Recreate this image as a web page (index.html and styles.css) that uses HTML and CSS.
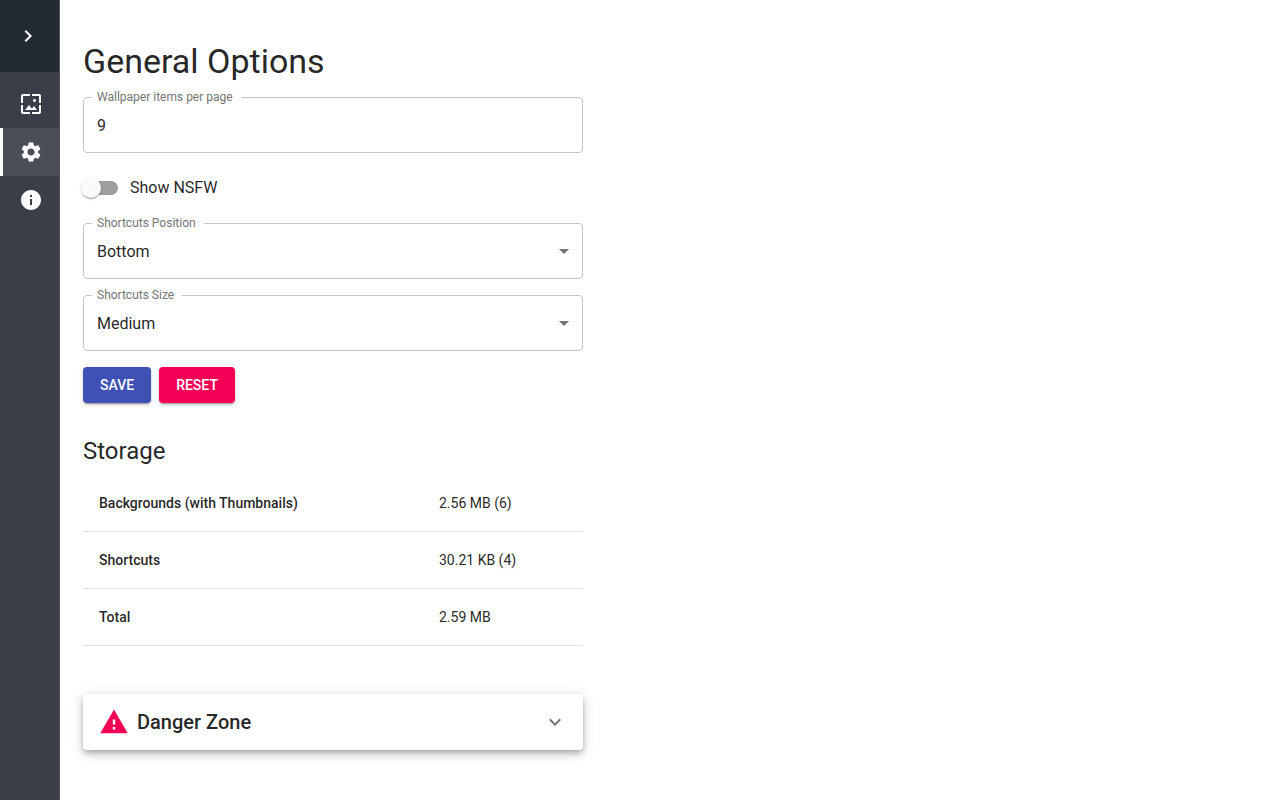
FILE: index.html
```html
<!DOCTYPE html>
<html lang="en">
<head>
<meta charset="utf-8">
<title>General Options</title>
<link rel="stylesheet" href="styles.css">
</head>
<body>
<nav class="sidebar" aria-label="Main">
  <button class="sidebar-toggle" type="button" aria-label="Expand menu">
    <svg class="icon-toggle" viewBox="0 0 24 24"><path d="M10 6L8.590 7.410 13.170 12l-4.580 4.590L10 18l6-6z"/></svg>
  </button>
  <a class="nav-item" href="#wallpapers" aria-label="Wallpapers">
    <svg class="icon" viewBox="0 0 24 24"><path d="M4 4h7V2H4c-1.100 0-2 .9-2 2v7h2V4zm6 9l-4 5h12l-3-4-2.030 2.710L10 13zm7-4.500c0-.83-.67-1.500-1.500-1.500S14 7.670 14 8.500s.67 1.500 1.500 1.500S17 9.330 17 8.500zM20 2h-7v2h7v7h2V4c0-1.100-.9-2-2-2zm0 18h-7v2h7c1.100 0 2-.9 2-2v-7h-2v7zM4 13H2v7c0 1.100.9 2 2 2h7v-2H4v-7z"/></svg>
  </a>
  <a class="nav-item nav-item-active" href="#options" aria-label="Options" aria-current="page">
    <svg class="icon" viewBox="0 0 24 24"><path d="M19.140 12.940c.04-.3.06-.61.06-.94 0-.32-.02-.64-.07-.94l2.030-1.580c.18-.14.23-.41.12-.61l-1.920-3.320c-.12-.22-.37-.29-.59-.22l-2.390.96c-.5-.38-1.030-.7-1.620-.94l-.36-2.540c-.04-.24-.24-.41-.48-.41h-3.840c-.24 0-.43.17-.47.41l-.36 2.540c-.59.24-1.130.57-1.620.94l-2.390-.96c-.22-.08-.47 0-.59.22L2.740 8.870c-.12.21-.08.47.12.61l2.030 1.580c-.05.3-.09.63-.09.94s.02.64.07.94l-2.030 1.580c-.18.14-.23.41-.12.61l1.920 3.320c.12.22.37.29.59.22l2.390-.96c.5.38 1.030.7 1.620.94l.36 2.540c.05.24.24.41.48.41h3.840c.24 0 .44-.17.47-.41l.36-2.540c.59-.24 1.130-.56 1.620-.94l2.390.96c.22.08.47 0 .59-.22l1.920-3.320c.12-.22.07-.47-.12-.61l-2.010-1.580zM12 15.600c-1.980 0-3.600-1.620-3.600-3.600s1.620-3.600 3.600-3.600 3.600 1.620 3.600 3.600-1.620 3.600-3.600 3.600z"/></svg>
  </a>
  <a class="nav-item" href="#about" aria-label="About">
    <svg class="icon" viewBox="0 0 24 24"><path d="M12 2C6.480 2 2 6.480 2 12s4.480 10 10 10 10-4.480 10-10S17.520 2 12 2zm1 15h-2v-6h2v6zm0-8h-2V7h2v2z"/></svg>
  </a>
</nav>
<main class="content">
  <h1 class="page-title">General Options</h1>
  <form class="options">
    <fieldset class="field">
      <legend class="field-legend"><label for="per-page">Wallpaper items per page</label></legend>
      <input class="field-control" id="per-page" type="text" inputmode="numeric" value="9">
    </fieldset>
    <label class="switch">
      <input class="switch-input" type="checkbox" role="switch">
      <span>Show NSFW</span>
    </label>
    <fieldset class="field">
      <legend class="field-legend"><label for="position">Shortcuts Position</label></legend>
      <div class="select-wrap">
        <select class="field-control" id="position"><option>Bottom</option><option>Top</option></select>
        <svg class="select-arrow" viewBox="0 0 24 24"><path d="M7 10l5 5 5-5z"/></svg>
      </div>
    </fieldset>
    <fieldset class="field">
      <legend class="field-legend"><label for="size">Shortcuts Size</label></legend>
      <div class="select-wrap">
        <select class="field-control" id="size"><option>Medium</option><option>Small</option><option>Large</option></select>
        <svg class="select-arrow" viewBox="0 0 24 24"><path d="M7 10l5 5 5-5z"/></svg>
      </div>
    </fieldset>
    <div class="actions">
      <button class="button button-primary" type="button">SAVE</button>
      <button class="button button-secondary" type="button">RESET</button>
    </div>
  </form>
  <h2 class="section-title">Storage</h2>
  <table class="storage">
    <tbody>
      <tr><th scope="row">Backgrounds (with Thumbnails)</th><td>2.56 MB (6)</td></tr>
      <tr><th scope="row">Shortcuts</th><td>30.21 KB (4)</td></tr>
      <tr><th scope="row">Total</th><td>2.59 MB</td></tr>
    </tbody>
  </table>
  <button class="danger" type="button" aria-expanded="false">
    <svg class="danger-icon" viewBox="0 0 24 24"><path d="M1 21h22L12 2 1 21zm12-3h-2v-2h2v2zm0-4h-2v-4h2v4z"/></svg>
    <span class="danger-title">Danger Zone</span>
    <svg class="danger-arrow" viewBox="0 0 24 24"><path d="M16.590 8.590L12 13.170 7.410 8.590 6 10l6 6 6-6z"/></svg>
  </button>
</main>
</body>
</html>
```
FILE: styles.css
```css
* {
  box-sizing: border-box;
}

body {
  margin: 0;
  min-height: 100vh;
  display: flex;
  background: #fff;
  color: rgba(0, 0, 0, 0.87);
  font-family: Roboto, "Liberation Sans", sans-serif;
  font-size: 16px;
}

button,
input,
select {
  font: inherit;
  color: inherit;
}

svg {
  display: block;
  fill: currentColor;
}

.sidebar {
  flex: none;
  width: 60px;
  display: flex;
  flex-direction: column;
  background: #3a3e47;
  border-right: 1px solid #4e525a;
  color: #fff;
}

.sidebar-toggle {
  height: 72px;
  margin-bottom: 8px;
  padding: 0 16px;
  display: flex;
  align-items: center;
  border: 0;
  background: #232a34;
}

.icon-toggle,
.icon {
  width: 24px;
  height: 24px;
}

.nav-item {
  height: 48px;
  padding-left: 19px;
  display: flex;
  align-items: center;
  color: #fff;
}

.nav-item-active {
  padding-left: 16px;
  border-left: 3px solid #fff;
  background: #4a4e57;
}

.content {
  flex: 1;
  max-width: 547px;
  padding: 40px 24px 48px 23px;
}

.page-title {
  margin: 0 0 9px;
  font-size: 34px;
  font-weight: 400;
  line-height: 42px;
}

.options {
  display: flex;
  flex-direction: column;
  gap: 10px;
}

.field {
  min-width: 0;
  margin: 0;
  padding: 0 0 0 8px;
  border: 1px solid #c4c4c4;
  border-radius: 4px;
}

.field-legend {
  padding: 0 8px 0 5px;
  color: #757575;
  font-size: 12px;
  line-height: 13px;
}

.field-control {
  width: 100%;
  height: 48px;
  padding: 12px 32px 17px 5px;
  display: block;
  border: 0;
  outline: 0;
  background: transparent;
  line-height: 19px;
  appearance: none;
}

.select-wrap {
  position: relative;
}

.select-arrow {
  position: absolute;
  top: 9px;
  right: 6px;
  width: 24px;
  height: 24px;
  color: #757575;
  pointer-events: none;
}

.switch {
  height: 44px;
  margin-top: 3px;
  margin-bottom: -3px;
  display: flex;
  align-items: center;
  gap: 12px;
  line-height: 20px;
}

.switch-input {
  width: 35px;
  height: 14px;
  margin: 0;
  display: flex;
  align-items: center;
  border-radius: 7px;
  background: #9e9e9e;
  appearance: none;
}

.switch-input::before {
  content: "";
  flex: none;
  width: 20px;
  height: 20px;
  margin-left: -2px;
  border-radius: 50%;
  background: #fafafa;
  box-shadow: 0 2px 1px -1px rgba(0, 0, 0, 0.2), 0 1px 1px rgba(0, 0, 0, 0.14), 0 1px 3px rgba(0, 0, 0, 0.12);
}

.switch-input:checked::before {
  margin-left: 17px;
}

.actions {
  margin-top: 6px;
  display: flex;
  gap: 8px;
}

.button {
  height: 36px;
  padding: 0 17px;
  border: 0;
  border-radius: 4px;
  color: #fff;
  font-size: 14px;
  font-weight: 500;
  box-shadow: 0 3px 1px -2px rgba(0, 0, 0, 0.2), 0 2px 2px rgba(0, 0, 0, 0.14), 0 1px 5px rgba(0, 0, 0, 0.12);
}

.button-primary {
  background: #3f51b5;
}

.button-secondary {
  background: #f50057;
}

.section-title {
  margin: 32px 0 8px;
  font-size: 24px;
  font-weight: 400;
  line-height: 32px;
}

.storage {
  width: 100%;
  border-collapse: separate;
  border-spacing: 0;
  font-size: 14px;
  line-height: 24px;
  text-align: left;
}

.storage th,
.storage td {
  padding: 16px;
  border-bottom: 1px solid #e0e0e0;
}

.storage th {
  width: 68%;
  font-weight: 500;
}

.danger {
  width: 100%;
  height: 56px;
  margin-top: 48px;
  padding: 0 16px;
  display: flex;
  align-items: center;
  gap: 8px;
  border: 0;
  border-radius: 4px;
  background: #fff;
  text-align: left;
  box-shadow: 0 3px 5px -1px rgba(0, 0, 0, 0.2), 0 5px 8px rgba(0, 0, 0, 0.14), 0 1px 14px rgba(0, 0, 0, 0.12);
}

.danger-icon {
  width: 30px;
  height: 30px;
  color: #f50057;
}

.danger-title {
  flex: 1;
  font-size: 20px;
  font-weight: 500;
  line-height: 32px;
}

.danger-arrow {
  width: 24px;
  height: 24px;
  color: #757575;
}
```
